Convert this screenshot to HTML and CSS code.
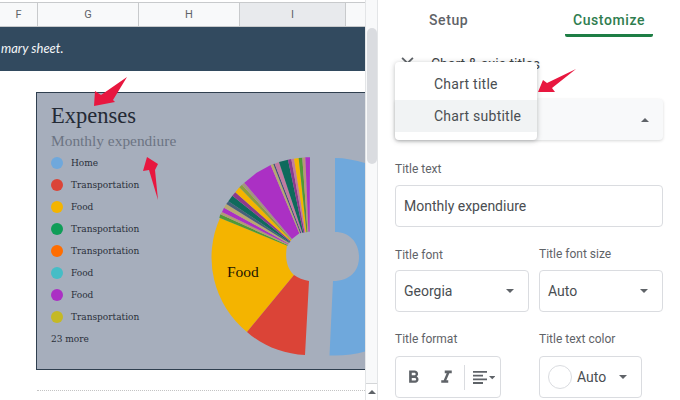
FILE: index.html
```html
<!DOCTYPE html>
<html lang="en">
<head>
<meta charset="utf-8">
<title>Chart editor</title>
<link rel="stylesheet" href="styles.css">
</head>
<body>
<div class="app">
  <section class="sheet">
    <div class="main">
      <div class="cols">
        <div class="col col-f">F</div>
        <div class="col col-g">G</div>
        <div class="col col-h">H</div>
        <div class="col col-i">I</div>
        <div class="col col-j"></div>
      </div>
      <div class="band"><em>mary sheet.</em></div>
      <div class="canvas">
        <div class="chart">
          <div class="legend-col">
            <h1 class="chart-title">Expenses</h1>
            <h2 class="chart-sub">Monthly expendiure</h2>
            <ul class="legend">
              <li><i class="dot c-blue"></i>Home</li>
              <li><i class="dot c-red"></i>Transportation</li>
              <li><i class="dot c-yellow"></i>Food</li>
              <li><i class="dot c-green"></i>Transportation</li>
              <li><i class="dot c-orange"></i>Transportation</li>
              <li><i class="dot c-cyan"></i>Food</li>
              <li><i class="dot c-purple"></i>Food</li>
              <li><i class="dot c-olive"></i>Transportation</li>
              <li class="more">23 more</li>
            </ul>
          </div>
          <svg class="pie" viewBox="200 150 165 219" aria-label="Pie chart">
            <path fill="#6fa8dc" d="M335 158V232C350 232 359 243 359 257C359 271 350 281 333 281L329.5 355.5C343 356 355 354.500 365 351.500V163C355 160 345 158 335 158Z"/>
            <path fill="#f4b400" d="M220 218A96 96 0 0 0 247 332L294 275C286 268 285 256 287 245.500Z"/>
            <path fill="#db4437" d="M247 332C263 346 283 354 305 355L309 281C303 280 298 278 294 275Z"/>
            <g transform="translate(200 150) scale(.33333)">
              <polygon fill="#4f9a35" points="58,203 61,193 263.400,285 262,287"/>
              <polygon fill="#b39a72" points="61,193 66,186 264.800,283 263.400,285"/>
              <polygon fill="#ab30c4" points="66,186 72,173 266.200,281 264.800,283"/>
              <polygon fill="#b8a870" points="72,173 79,162 267.600,279 266.200,281"/>
              <polygon fill="#46607a" points="79,162 85,154 269,277 267.600,279"/>
              <polygon fill="#0f6a5c" points="85,154 97,137 270.400,275 269,277"/>
              <polygon fill="#8c3a8c" points="97,137 106,127 271.800,273 270.400,275"/>
              <polygon fill="#f4b400" points="106,127 118,112 273.200,271 271.800,273"/>
              <polygon fill="#8a9f3c" points="118,112 126,104 274.600,269 273.200,271"/>
              <polygon fill="#a4937f" points="126,104 133,98 276,267 274.600,269"/>
              <polygon fill="#ab30c4" points="133,98 170,68 212,45 298,250 276,267"/>
              <polygon fill="#b8a870" points="212,45 220,42 301,249.500 298,250"/>
              <polygon fill="#3f4f78" points="220,42 224,41 304,249 301,249.500"/>
              <polygon fill="#c27ba0" points="224,41 237,36 307,248.500 304,249"/>
              <polygon fill="#0f6a5c" points="237,36 264,29 310,248 307,248.500"/>
              <polygon fill="#8c3a8c" points="264,29 274,27 313.500,247.500 310,248"/>
              <polygon fill="#c27ba0" points="274,27 282,26 316.500,247 313.500,247.500"/>
              <polygon fill="#f4b400" points="282,26 296,24 319.500,246.500 316.500,247"/>
              <polygon fill="#4f9a35" points="296,24 307,23 322.500,246 319.500,246.500"/>
              <polygon fill="#b8957a" points="307,23 316,22 325.500,245.500 322.500,246"/>
              <polygon fill="#ab30c4" points="316,22 330,22 329,245 325.500,245.500"/>
            </g>
            <text class="pie-label" x="227" y="277">Food</text>
          </svg>
        </div>
        <div class="dots"></div>
      </div>
    </div>
    <div class="scroll">
      <div class="thumb"></div>
      <div class="scroll-btn"><span class="caret up"></span></div>
    </div>
  </section>

  <aside class="panel">
    <nav class="tabs">
      <div class="tab">Setup</div>
      <div class="tab active">Customize</div>
    </nav>
    <div class="section-head">
      <svg class="chev" viewBox="0 0 16 10"><path d="M2 2l6 6 6-6" fill="none" stroke="#5f6368" stroke-width="2"/></svg>
      <span>Chart &amp; axis titles</span>
    </div>
    <div class="picker"><span class="caret up"></span></div>
    <label class="lbl lbl-text">Title text</label>
    <div class="field input">Monthly expendiure</div>
    <div class="two">
      <div class="cell-a">
        <label class="lbl lbl-font">Title font</label>
        <div class="field select">Georgia<span class="caret"></span></div>
      </div>
      <div class="cell-b">
        <label class="lbl lbl-size">Title font size</label>
        <div class="field select">Auto<span class="caret"></span></div>
      </div>
    </div>
    <div class="two two-last">
      <div class="cell-a">
        <label class="lbl lbl-fmt">Title format</label>
        <div class="field toolbar">
          <svg class="ic ic-b" viewBox="0 0 24 24"><path fill="#5f6368" d="M15.6 10.790c.97-.67 1.650-1.770 1.650-2.790 0-2.260-1.750-4-4-4H7v14h7.040c2.090 0 3.710-1.700 3.710-3.790 0-1.520-.86-2.820-2.150-3.420zM10 6.500h3c.83 0 1.500.67 1.500 1.500s-.67 1.500-1.500 1.500h-3v-3zm3.500 9H10v-3h3.500c.83 0 1.500.67 1.500 1.500s-.67 1.500-1.500 1.500z"/></svg>
          <svg class="ic ic-i" viewBox="0 0 24 24"><path fill="#5f6368" d="M10 4v3h2.210l-3.420 8H6v3h8v-3h-2.210l3.420-8H18V4z"/></svg>
          <span class="sep"></span>
          <svg class="ic-align" viewBox="0 0 22 13"><path fill="#5f6368" d="M0 0h14v1.800H0zM0 3.700h10v1.800H0zM0 7.400h14v1.800H0zM0 11.100h10v1.800H0zM16 5h6.500l-3.250 3.300z"/></svg>
        </div>
      </div>
      <div class="cell-b">
        <label class="lbl lbl-fmt">Title text color</label>
        <div class="field color"><span class="swatch"></span><span class="auto">Auto</span><span class="caret"></span></div>
      </div>
    </div>
    <div class="menu">
      <div class="menu-item">Chart title</div>
      <div class="menu-item hover">Chart subtitle</div>
    </div>
  </aside>
</div>
<svg class="arrows" viewBox="0 0 680 400" aria-hidden="true">
  <polygon points="127,77 113,100 115,102 94,106 95,91 101,95"/>
  <polygon points="147,157 158,164 155,170 158,200 149,170 143,171"/>
  <polygon points="576,69 552,88 555,92 538,92 543,80 547,83"/>
</svg>
</body>
</html>
```
FILE: styles.css
```css
* { box-sizing: border-box; }
html, body { margin: 0; padding: 0; }
body { width: 680px; height: 400px; overflow: hidden; background: #fff; font-family: Roboto, "Liberation Sans", sans-serif; position: relative; }
.app { display: flex; width: 680px; height: 400px; }

.sheet { width: 378px; display: flex; flex: none; padding-top: 2px; }
.main { width: 365px; flex: none; overflow: hidden; }
.cols { display: flex; height: 25px; background: #f8f9fa; border-top: 1px solid #c8cacc; border-bottom: 1px solid #c8cacc; }
.col { display: flex; align-items: center; justify-content: center; font-size: 11px; color: #5f6368; border-right: 1px solid #c8cacc; flex: none; }
.col-f { width: 38px; }
.col-g { width: 101px; }
.col-h { width: 101px; }
.col-i { width: 106px; background: #e8eaed; }
.col-j { width: 19px; border-right: 0; }
.band { height: 44px; background: #324a5f; color: #f4f6f8; font: italic 13px Lato, sans-serif; display: flex; align-items: center; padding: 0 0 2px 1px; }
.canvas { padding: 21px 0 0 36px; }
.chart { width: 329px; height: 278px; background: #a6aebc; border: 1px solid #2f3f4f; border-right: 0; display: flex; justify-content: space-between; }
.legend-col { padding: 10px 0 0 14px; font-family: "Liberation Serif", serif; }
.chart-title { margin: 0; font-weight: 400; font-size: 22.500px; line-height: 26px; color: #242a35; }
.chart-sub { margin: 0; padding-top: 1px; font-weight: 400; font-size: 15.400px; line-height: 22px; color: #6c7483; }
.legend { list-style: none; margin: 0; padding: 0; font-family: "DejaVu Serif", serif; font-size: 9px; color: #2a2f3a; }
.legend li { height: 22px; display: flex; align-items: center; gap: 8px; }
.dot { width: 12px; height: 12px; border-radius: 50%; flex: none; }
.c-blue { background: #6fa8dc; }
.c-red { background: #db4437; }
.c-yellow { background: #f4b400; }
.c-green { background: #0f9d58; }
.c-orange { background: #ff6d00; }
.c-cyan { background: #46bdc6; }
.c-purple { background: #ab30c4; }
.c-olive { background: #c5b925; }
.pie { width: 165px; height: 219px; margin-top: 57px; flex: none; }
.pie-label { font: 15.500px "Liberation Serif", serif; fill: #1c1500; }
.dots { margin-top: 20px; margin-left: 1px; border-top: 1px dotted #c4c4c4; }

.scroll { width: 13px; flex: none; margin-top: -2px; background: #f8f9fa; border-left: 1px solid #e3e5e7; border-right: 1px solid #e3e5e7; display: flex; flex-direction: column; justify-content: space-between; padding-top: 28px; }
.thumb { width: 10px; height: 136px; margin-left: 1px; background: #dadce0; border-radius: 5px; }
.scroll-btn { height: 17px; border-top: 1px solid #d4d6d8; background: #fff; display: flex; align-items: center; justify-content: center; }

.panel { width: 302px; flex: none; position: relative; padding: 0 17px; color: #3c4043; }
.tabs { display: flex; height: 37px; }
.tab { font-size: 14px; font-weight: 500; letter-spacing: .6px; color: #5f6368; padding-top: 12px; line-height: 17px; }
.tab:first-child { margin-left: 34px; width: 136px; }
.tab.active { width: 88px; text-align: center; color: #2f7d4f; border-bottom: 3px solid #1e7e45; border-radius: 0 0 2px 2px; }
.section-head { display: flex; align-items: center; gap: 16px; height: 20px; margin-top: 17px; padding-left: 5px; font-size: 14px; color: #3c4043; }
.chev { width: 15px; height: 9px; flex: none; align-self: flex-start; margin-top: 2px; }
.picker { height: 41px; margin-top: 25px; background: #f8f9fa; border-radius: 4px; box-shadow: 0 1px 3px rgba(60,64,67,.2); display: flex; align-items: center; justify-content: flex-end; padding-right: 14px; }
.lbl { display: block; font-size: 12px; line-height: 16px; color: #5f6368; }
.lbl-text { margin-top: 21px; }
.field { border: 1px solid #dadce0; border-radius: 4px; height: 42px; display: flex; align-items: center; font-size: 14px; color: #4a4e52; background: #fff; }
.input { margin-top: 8px; padding-left: 8px; }
.two { display: flex; gap: 10px; margin-top: 20px; }
.two-last { margin-top: 19px; }
.cell-a { width: 134px; }
.cell-b { width: 124px; }
.lbl-font { margin-bottom: 7px; }
.lbl-size { margin-top: -1px; margin-bottom: 8px; }
.lbl-fmt { margin-bottom: 9px; }
.select { padding: 0 14px 0 8px; justify-content: space-between; }
.caret { width: 0; height: 0; border: 4px solid transparent; border-top: 4px solid #5f6368; border-bottom: 0; flex: none; }
.caret.up { border-top: 0; border-bottom: 4px solid #5f6368; }
.toolbar { width: 106px; padding-left: 7px; }
.ic { width: 21px; height: 21px; flex: none; }
.ic-i { margin-left: 12px; }
.sep { width: 1px; height: 25px; background: #dadce0; margin: 0 8px 0 7px; flex: none; }
.ic-align { width: 22px; height: 13px; flex: none; }
.color { width: 103px; padding-left: 8px; }
.swatch { width: 24px; height: 24px; border: 1px solid #dadce0; border-radius: 50%; flex: none; }
.auto { margin-left: 5px; flex: 1; }
.color .caret { margin-right: 14px; }

.menu { position: absolute; left: 17px; top: 62px; width: 142px; height: 78px; padding: 6px 0; background: #fff; border-radius: 4px; box-shadow: 0 1px 5px rgba(60,64,67,.35); }
.menu-item { height: 32px; padding: 0 0 0 39px; display: flex; align-items: center; font-size: 14px; letter-spacing: .25px; color: #4a4e52; }
.menu-item.hover { background: #f1f3f4; }

.arrows { position: absolute; left: 0; top: 0; width: 680px; height: 400px; pointer-events: none; fill: #e8173f; }
```
